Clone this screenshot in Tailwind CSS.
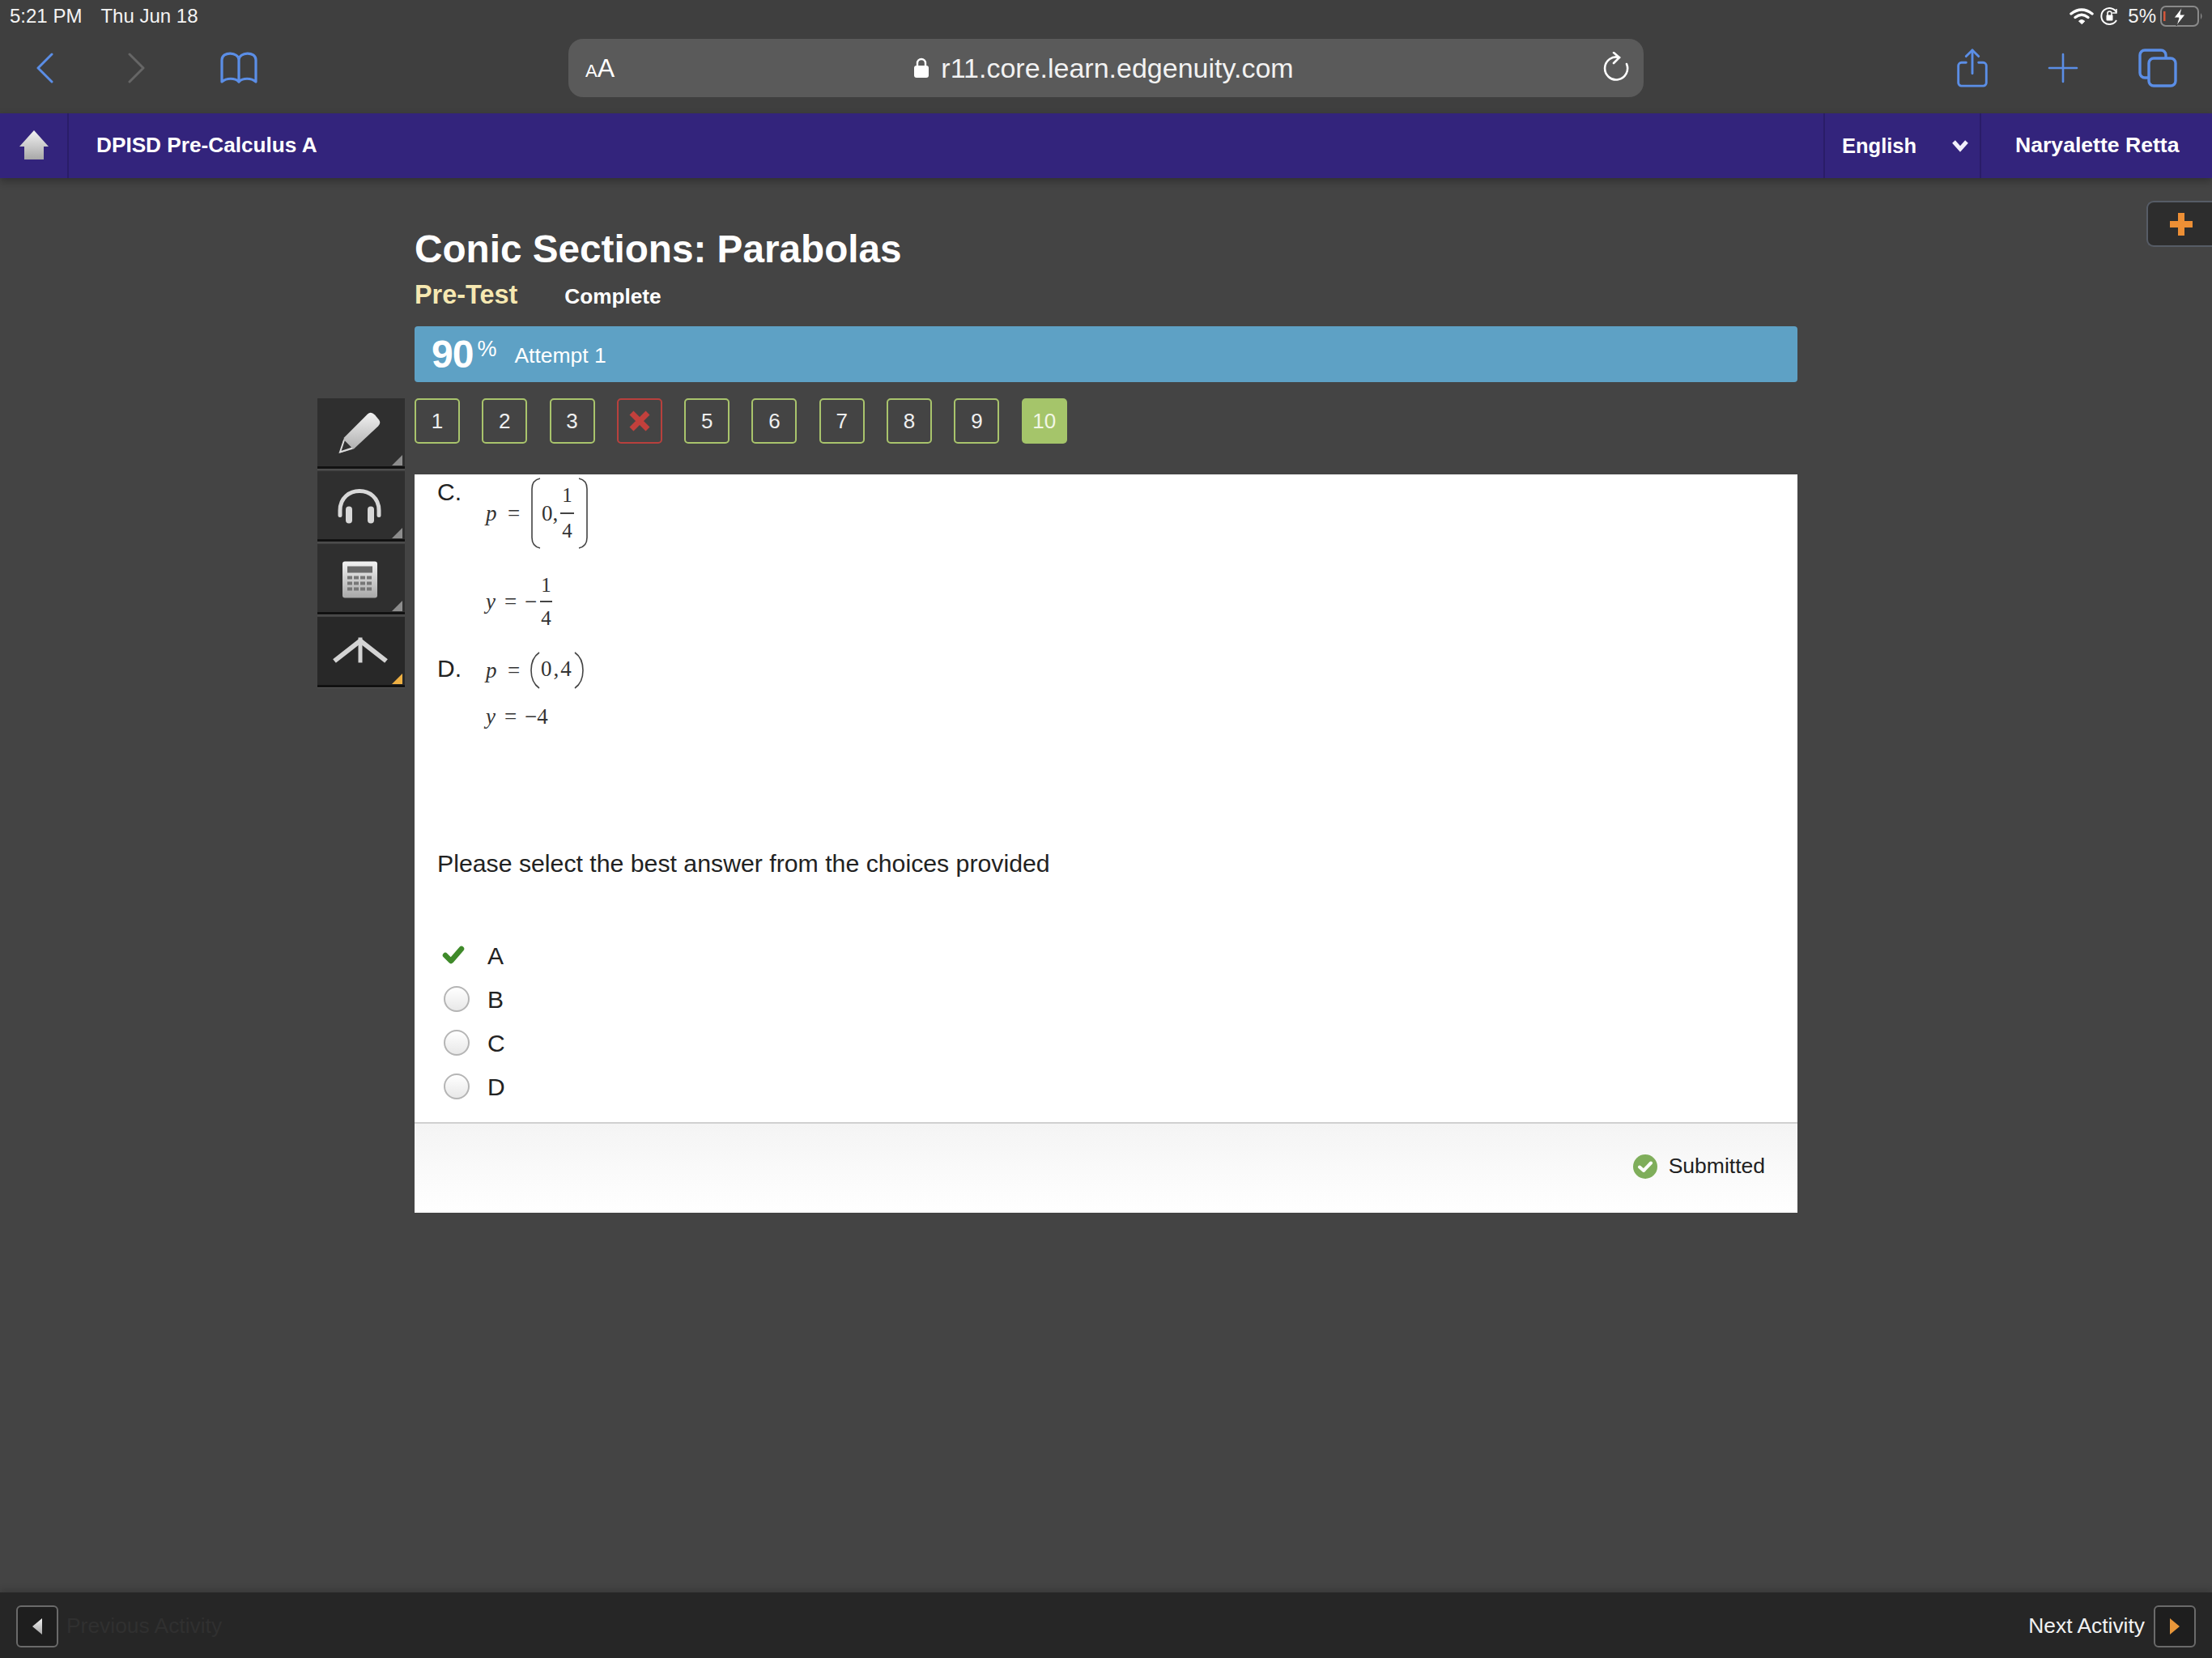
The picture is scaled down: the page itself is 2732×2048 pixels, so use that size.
<!DOCTYPE html>
<html lang="en">
<head>
    <meta charset="UTF-8">
    <meta name="viewport" content="width=device-width, initial-scale=1.0">
    <title>Conic Sections: Parabolas</title>
    <script src="https://cdn.jsdelivr.net/npm/@tailwindcss/browser@4"></script>
</head>
<body class="bg-[#444444] font-['Liberation_Sans',Arial,sans-serif]">
<svg width="0" height="0" class="absolute">
    <defs>
        <linearGradient id="metal" x1="0" y1="0" x2="0" y2="1">
            <stop offset="0" stop-color="#f2f2f2"/>
            <stop offset="1" stop-color="#a8a8a8"/>
        </linearGradient>
    </defs>
</svg>
<div class="flex flex-col w-[2732px] h-[2048px] overflow-hidden">

    <!-- Safari chrome -->
    <div class="bg-[#3f3f3f] h-[140px] shrink-0 relative">
        <div class="h-[48px] flex items-center justify-between pl-[12px] pr-[10px] text-[#f4f4f4] text-[24px] pb-[8px]">
            <div class="flex gap-[23px]"><span>5:21 PM</span><span>Thu Jun 18</span></div>
            <div class="flex items-center">
                <svg width="30" height="22" viewBox="0 0 30 22" fill="none" stroke="#fff" stroke-width="3.4" stroke-linecap="round"><path d="M2 8 Q15 -2 28 8"/><path d="M7 12.5 Q15 6 23 12.5"/><path d="M15 20.5 L11.5 17 Q15 14 18.5 17 Z" fill="#fff" stroke-width="1"/></svg>
                <svg class="ml-[8px]" width="24" height="24" viewBox="0 0 24 24" fill="none" stroke="#fff" stroke-width="2"><path d="M20 17 A10 10 0 1 1 20 7"/><path d="M20 3 L20 8 L15 8" stroke-width="1.5"/><rect x="7.5" y="10.5" width="8" height="7" rx="1" fill="#fff" stroke="none"/><path d="M9 11 V8.5 a2.5 2.5 0 0 1 5 0 V11" stroke-width="1.6"/></svg>
                <span class="ml-[10px]">5%</span>
                <svg class="ml-[5px]" width="54" height="26" viewBox="0 0 54 26" fill="none"><rect x="1" y="1" width="46" height="24" rx="6" stroke="#8a8a8a" stroke-width="2"/><rect x="4" y="7" width="2.5" height="12" fill="#d4573a"/><path d="M27 2 L17 15 L23 15 L20 25 L31 11 L25 11 Z" fill="#fff" stroke="#3f3f3f" stroke-width="1"/><path d="M50 9 Q53 13 50 17 Z" fill="#8a8a8a"/></svg>
            </div>
        </div>
        <div class="flex items-center h-[72px]">
            <div class="w-[702px] flex items-center pl-[44px]">
                <svg width="22" height="38" viewBox="0 0 22 38" fill="none" stroke="#5b8ee6" stroke-width="3" stroke-linecap="round" stroke-linejoin="round"><path d="M20 2 L3 19 L20 36"/></svg>
                <svg class="ml-[91px]" width="23" height="38" viewBox="0 0 23 38" fill="none" stroke="#666666" stroke-width="3" stroke-linecap="round" stroke-linejoin="round"><path d="M3 2 L20 19 L3 36"/></svg>
                <svg class="ml-[92px]" width="46" height="40" viewBox="0 0 46 40" fill="none" stroke="#5b8ee6" stroke-width="3.2" stroke-linejoin="round"><path d="M23 37 V10 C23 0 2 -1 2 10 V37 C8 32 18 32 23 37 C28 32 38 32 44 37 V10 C44 -1 23 0 23 10"/></svg>
            </div>
            <div class="w-[1328px] h-[72px] bg-[#5a5a5a] rounded-[18px] flex items-center relative text-white">
                <div class="absolute left-[21px] top-[20px] leading-none flex items-baseline"><span class="text-[22px]">A</span><span class="text-[32px]">A</span></div>
                <div class="w-full flex justify-center items-center pr-[6px]">
                    <svg width="20" height="26" viewBox="0 0 20 26" fill="none"><rect x="1" y="10" width="18" height="15" rx="3" fill="#fff"/><path d="M5 11 V7 a5 5 0 0 1 10 0 V11" stroke="#fff" stroke-width="2.4"/></svg>
                    <span class="ml-[14px] text-[34px] text-[#f2f2f2]">r11.core.learn.edgenuity.com</span>
                </div>
                <svg class="absolute right-[18px] top-[16px]" width="32" height="38" viewBox="0 0 32 38" fill="none" stroke="#fff" stroke-width="2.6" stroke-linecap="round"><path d="M20 7 A14 14 0 1 0 29 15"/><path d="M13 1 L20 7 L13 14"/></svg>
            </div>
            <div class="flex items-center pl-[386px]">
                <svg width="40" height="48" viewBox="0 0 40 50" fill="none" stroke="#5b8ee6" stroke-width="3" stroke-linecap="round" stroke-linejoin="round"><path d="M12 18 H6 a4 4 0 0 0 -4 4 V44 a4 4 0 0 0 4 4 H34 a4 4 0 0 0 4 -4 V22 a4 4 0 0 0 -4 -4 H28"/><path d="M20 32 V2"/><path d="M12 10 L20 2 L28 10"/></svg>
                <svg class="ml-[73px]" width="38" height="38" viewBox="0 0 38 38" fill="none" stroke="#5b8ee6" stroke-width="2.6" stroke-linecap="round"><path d="M19 2 V36 M2 19 H36"/></svg>
                <svg class="ml-[74px]" width="48" height="48" viewBox="0 0 48 48" fill="none" stroke="#5b8ee6" stroke-width="3.4" stroke-linejoin="round"><path d="M12 36 H8 a6 6 0 0 1 -6 -6 V8 a6 6 0 0 1 6 -6 H28 a6 6 0 0 1 6 6 V12"/><rect x="13" y="12" width="33" height="34" rx="6"/></svg>
            </div>
        </div>
    </div>

    <!-- Course header -->
    <div class="bg-[#33247c] h-[80px] shrink-0 flex items-center text-white text-[26.2px] font-bold shadow-[0_4px_10px_rgba(0,0,0,0.3)] z-10">
        <div class="w-[85px] h-full flex items-center justify-center border-r-2 border-[#2a1d68]">
            <svg width="38" height="38" viewBox="0 0 38 38"><path d="M19 0 L37 20 H31 V36 H7 V20 H1 Z" fill="url(#metal)"/></svg>
        </div>
        <div class="pl-[34px] flex-1">DPISD Pre-Calculus A</div>
        <div class="w-[195px] h-full flex items-center border-x-2 border-[#2a1d68] pl-[21px] relative">
            <span class="text-[25.5px]">English</span>
            <svg class="absolute right-[14px] top-[32px]" width="20" height="16" viewBox="0 0 20 16" fill="none" stroke="#f2f0fa" stroke-width="5"><path d="M2 3 L10 12 L18 3"/></svg>
        </div>
        <div class="w-[285px] pl-[42px] text-[26.6px]">Naryalette Retta</div>
    </div>

    <!-- Activity area -->
    <div class="flex-1 flex pl-[392px] relative min-h-0">
        <div class="absolute right-0 top-[28px] w-[81px] h-[57px] bg-[#2d2d2d] border-2 border-r-0 border-[#565c66] rounded-l-[9px] flex items-center pl-[26px]">
            <svg width="30" height="30" viewBox="0 0 30 30"><path d="M11 1 H19 V11 H29 V19 H19 V29 H11 V19 H1 V11 H11 Z" fill="#ed8f35"/></svg>
        </div>

        <!-- Tool rail -->
        <div class="w-[108px] mt-[272px] flex flex-col gap-[3px]">
            <div class="relative h-[87px] bg-[#2f2f2f] border-b-[3px] border-[#111111] shadow-[0_1px_0_#555555]">
                <svg width="108" height="84" viewBox="0 0 108 83"><path d="M62 19 Q66 15 71 20 L76 26 Q79 30 75 34 L45 62 L28 67 L33 48 Z" fill="url(#metal)"/><path d="M33 51 L28 66 L43 61" fill="#333" stroke="#ddd" stroke-width="2"/></svg>
                <div class="absolute right-[3px] bottom-[1px] w-[13px] h-[13px] bg-[#8d8d8d] [clip-path:polygon(100%_0,100%_100%,0_100%)]"></div>
            </div>
            <div class="relative h-[87px] bg-[#2f2f2f] border-b-[3px] border-[#111111] shadow-[0_1px_0_#555555]">
                <svg width="108" height="84" viewBox="0 0 108 83" fill="none"><path d="M28 54 V48 C28 16 76 16 76 48 V54" stroke="#d8d8d8" stroke-width="5" stroke-linecap="round"/><rect x="35" y="43" width="8" height="21" rx="4" fill="#d8d8d8"/><rect x="62" y="43" width="8" height="21" rx="4" fill="#d8d8d8"/></svg>
                <div class="absolute right-[3px] bottom-[1px] w-[13px] h-[13px] bg-[#8d8d8d] [clip-path:polygon(100%_0,100%_100%,0_100%)]"></div>
            </div>
            <div class="relative h-[87px] bg-[#2f2f2f] border-b-[3px] border-[#111111] shadow-[0_1px_0_#555555]">
                <svg width="108" height="84" viewBox="0 0 108 83">
                    <rect x="31" y="21" width="43" height="45" rx="3" fill="url(#metal)"/>
                    <rect x="37" y="27" width="31" height="8" fill="#6a6a6a"/>
                    <path d="M37 39 h6 v4 h-6z M45 39 h6 v4 h-6z M53 39 h6 v4 h-6z M61 39 h6 v4 h-6z M37 46 h6 v4 h-6z M45 46 h6 v4 h-6z M53 46 h6 v4 h-6z M61 46 h6 v4 h-6z M37 53 h6 v4 h-6z M45 53 h6 v4 h-6z M53 53 h6 v4 h-6z M61 53 h6 v4 h-6z" fill="#777"/>
                </svg>
                <div class="absolute right-[3px] bottom-[1px] w-[13px] h-[13px] bg-[#8d8d8d] [clip-path:polygon(100%_0,100%_100%,0_100%)]"></div>
            </div>
            <div class="relative h-[87px] bg-[#282828] border-b-[3px] border-[#111111] shadow-[0_1px_0_#555555]">
                <svg width="108" height="84" viewBox="0 0 108 83" fill="none" stroke="#d4d4d4" stroke-width="6"><path d="M21 54 L53 29 L85 54"/><path d="M53 25 V56" stroke-width="5"/></svg>
                <div class="absolute right-[3px] bottom-[1px] w-[13px] h-[13px] bg-[#eeb043] [clip-path:polygon(100%_0,100%_100%,0_100%)]"></div>
            </div>
        </div>

        <!-- Activity -->
        <div class="ml-[12px] w-[1708px] flex flex-col">
            <h1 class="h-[64px] mt-[56px] leading-[64px] text-[47.7px] font-bold text-white">Conic Sections: Parabolas</h1>
            <div class="h-[40px] flex items-baseline font-bold">
                <span class="text-[32.4px] text-[#f6e8b1]">Pre-Test</span>
                <span class="ml-[58px] text-[26.2px] text-white">Complete</span>
            </div>
            <div class="h-[69px] mt-[23px] bg-[#5ea1c5] rounded-[4px] flex items-center pl-[21px] text-white">
                <span class="text-[48px] font-bold tracking-[-1px]">90</span>
                <span class="text-[27px] ml-[5px] mb-[12px]">%</span>
                <span class="text-[26.5px] ml-[22px] mt-[4px]">Attempt 1</span>
            </div>

            <div class="flex gap-[27.3px] mt-[20px] text-[26px] text-[#f0f0f0]">
                <div class="w-[56px] h-[56px] border-2 border-[#a9c46c] rounded-[5px] flex items-center justify-center pt-[1px]">1</div>
                <div class="w-[56px] h-[56px] border-2 border-[#a9c46c] rounded-[5px] flex items-center justify-center pt-[1px]">2</div>
                <div class="w-[56px] h-[56px] border-2 border-[#a9c46c] rounded-[5px] flex items-center justify-center pt-[1px]">3</div>
                <div class="w-[56px] h-[56px] border-2 border-[#b8403d] rounded-[5px] flex items-center justify-center">
                    <svg width="26" height="26" viewBox="0 0 26 26" fill="none" stroke="#c2403c" stroke-width="7"><path d="M3 3 L23 23 M23 3 L3 23"/></svg>
                </div>
                <div class="w-[56px] h-[56px] border-2 border-[#a9c46c] rounded-[5px] flex items-center justify-center pt-[1px]">5</div>
                <div class="w-[56px] h-[56px] border-2 border-[#a9c46c] rounded-[5px] flex items-center justify-center pt-[1px]">6</div>
                <div class="w-[56px] h-[56px] border-2 border-[#a9c46c] rounded-[5px] flex items-center justify-center pt-[1px]">7</div>
                <div class="w-[56px] h-[56px] border-2 border-[#a9c46c] rounded-[5px] flex items-center justify-center pt-[1px]">8</div>
                <div class="w-[56px] h-[56px] border-2 border-[#a9c46c] rounded-[5px] flex items-center justify-center pt-[1px]">9</div>
                <div class="w-[56px] h-[56px] bg-[#a5c56a] rounded-[5px] flex items-center justify-center pt-[1px] text-[#f2f6e6]">10</div>
            </div>

            <!-- Question panel -->
            <div class="mt-[38px] h-[912px] bg-white flex flex-col text-[30px] text-[#222222]">
                <div class="pl-[28px] pt-[4px]">
                    <div class="flex h-[88px]">
                        <div class="w-[60px] leading-[36px]">C.</div>
                        <div class="flex items-center font-['Liberation_Serif',serif] text-[27px] text-[#333333]">
                            <span class="italic w-[27px]">p</span><span class="w-[29px]">=</span>
                            <svg width="13" height="88" viewBox="0 0 13 88" fill="none" stroke="#444" stroke-width="1.6"><path d="M11 1 Q1 3 1 14 V74 Q1 85 11 87"/></svg>
                            <span class="w-[23px]">0,</span>
                            <div class="flex flex-col items-center w-[17px] leading-[38px] text-[25px]">
                                <span class="leading-[42px]">1</span><span class="w-full h-[2px] bg-[#444444]"></span><span class="leading-[42px]">4</span>
                            </div>
                            <svg class="ml-[4px]" width="13" height="88" viewBox="0 0 13 88" fill="none" stroke="#444" stroke-width="1.6"><path d="M2 1 Q12 3 12 14 V74 Q12 85 2 87"/></svg>
                        </div>
                    </div>
                    <div class="flex h-[80px] mt-[25px] pl-[60px]">
                        <div class="flex items-center font-['Liberation_Serif',serif] text-[27px] text-[#333333]">
                            <span class="italic w-[23px]">y</span><span class="w-[25px]">=</span><span class="w-[19px]">−</span>
                            <div class="flex flex-col items-center w-[15px] text-[25px]">
                                <span class="leading-[39px]">1</span><span class="w-full h-[2px] bg-[#444444]"></span><span class="leading-[39px]">4</span>
                            </div>
                        </div>
                    </div>
                    <div class="flex h-[46px] mt-[22px]">
                        <div class="w-[60px] leading-[42px]">D.</div>
                        <div class="flex items-center font-['Liberation_Serif',serif] text-[27px] text-[#333333]">
                            <span class="italic w-[27px]">p</span><span class="w-[28px]">=</span>
                            <svg width="13" height="46" viewBox="0 0 13 46" fill="none" stroke="#444" stroke-width="1.6"><path d="M11 1 Q1 8 1 23 Q1 38 11 45"/></svg>
                            <span class="w-[40px] tracking-[2px] mb-[3px]">0,4</span>
                            <svg width="13" height="46" viewBox="0 0 13 46" fill="none" stroke="#444" stroke-width="1.6"><path d="M2 1 Q12 8 12 23 Q12 38 2 45"/></svg>
                        </div>
                    </div>
                    <div class="flex h-[40px] mt-[14px] pl-[60px] items-center font-['Liberation_Serif',serif] text-[27px] text-[#333333]">
                        <span class="italic w-[23px]">y</span><span class="w-[25px]">=</span><span>−4</span>
                    </div>
                    <p class="h-[40px] mt-[142px] leading-[40px] text-[30.25px]">Please select the best answer from the choices provided</p>
                    <div class="mt-[66px]">
                        <div class="h-[54px] flex items-center">
                            <div class="w-[62px] pl-[6px]">
                                <svg width="28" height="24" viewBox="0 0 28 24" fill="none" stroke="#3f8a2a" stroke-width="6.5" stroke-linecap="round" stroke-linejoin="round"><path d="M4 12 L11 19 L24 4"/></svg>
                            </div>
                            <span>A</span>
                        </div>
                        <div class="h-[54px] flex items-center">
                            <div class="w-[62px] pl-[8px]"><div class="w-[32px] h-[32px] rounded-full border-2 border-[#b5b5b5] bg-gradient-to-b from-white to-[#e8e8e8]"></div></div>
                            <span>B</span>
                        </div>
                        <div class="h-[54px] flex items-center">
                            <div class="w-[62px] pl-[8px]"><div class="w-[32px] h-[32px] rounded-full border-2 border-[#b5b5b5] bg-gradient-to-b from-white to-[#e8e8e8]"></div></div>
                            <span>C</span>
                        </div>
                        <div class="h-[54px] flex items-center">
                            <div class="w-[62px] pl-[8px]"><div class="w-[32px] h-[32px] rounded-full border-2 border-[#b5b5b5] bg-gradient-to-b from-white to-[#e8e8e8]"></div></div>
                            <span>D</span>
                        </div>
                    </div>
                </div>
                <div class="mt-auto h-[112px] border-t-2 border-[#d0d0d0] bg-gradient-to-b from-[#f4f4f4] to-white flex items-center justify-end pr-[40px] pb-[4px] text-[26.5px]">
                    <svg width="30" height="30" viewBox="0 0 30 30" fill="none"><circle cx="15" cy="15" r="15" fill="#7fae5b"/><path d="M8 15.5 L13 20 L22 10.5" stroke="#fff" stroke-width="4" stroke-linecap="round" stroke-linejoin="round"/></svg>
                    <span class="ml-[14px]">Submitted</span>
                </div>
            </div>
        </div>
    </div>

    <!-- Activity nav -->
    <div class="h-[81px] shrink-0 bg-[#262626] flex items-center justify-between pl-[20px] pr-[20px] pt-[3px] text-[26.4px] shadow-[0_-4px_8px_rgba(0,0,0,0.15)]">
        <div class="flex items-center">
            <div class="w-[52px] h-[52px] border-2 border-[#6a6a6a] rounded-[6px] bg-[#1e1e1e] flex items-center justify-center">
                <svg width="14" height="20" viewBox="0 0 14 20"><path d="M13 0 V20 L1 10 Z" fill="url(#metal)"/></svg>
            </div>
            <span class="ml-[10px] text-[#303030]">Previous Activity</span>
        </div>
        <div class="flex items-center">
            <span class="text-[#f2f2f2]">Next Activity</span>
            <div class="ml-[11px] w-[52px] h-[52px] border-2 border-[#6a6a6a] rounded-[6px] bg-[#1e1e1e] flex items-center justify-center">
                <svg width="14" height="20" viewBox="0 0 14 20"><path d="M1 0 V20 L13 10 Z" fill="#e9973a"/></svg>
            </div>
        </div>
    </div>
</div>
</body>
</html>
